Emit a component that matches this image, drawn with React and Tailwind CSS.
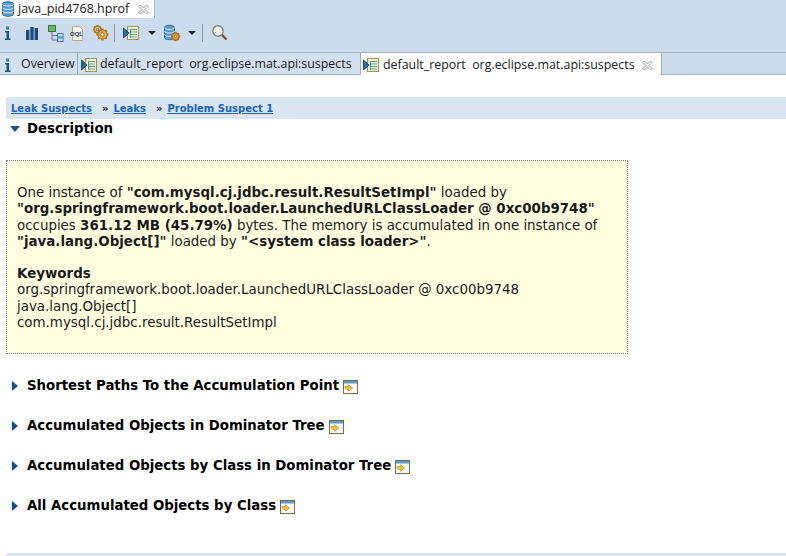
import React from 'react';

const uiFont = "font-['Open_Sans','Noto_Sans',sans-serif]";

function InfoIcon() {
  return (
    <svg width="16" height="16" viewBox="0 0 16 16" className="block">
      <rect x="6" y="1.5" width="3" height="3" fill="#2f7fb8" />
      <path d="M5 6h4v7.5h1.5V15H5v-1.5h1.5V7.5H5z" fill="#14568f" />
    </svg>
  );
}

function BarsIcon() {
  return (
    <svg width="16" height="16" viewBox="0 0 16 16" className="block">
      <rect x="2" y="5" width="3.4" height="10" fill="#1f4a7c" />
      <rect x="6.3" y="2" width="3.4" height="13" fill="#1f4a7c" />
      <rect x="10.6" y="3" width="3.4" height="12" fill="#1f4a7c" />
    </svg>
  );
}

function TreeIcon() {
  return (
    <svg width="18" height="18" viewBox="0 0 18 18" className="block">
      <rect x="1.5" y="1.5" width="7" height="6" fill="#6fb26a" stroke="#2f7a3c" />
      <path d="M5 8v8h5M5 11.5h5" fill="none" stroke="#6d7680" />
      <rect x="10.5" y="9.5" width="5.5" height="3.5" fill="#cfe2f5" stroke="#3f7fc0" />
      <rect x="10.5" y="14" width="5.5" height="3.5" fill="#cfe2f5" stroke="#3f7fc0" />
    </svg>
  );
}

function OqlIcon() {
  return (
    <svg width="16" height="18" viewBox="0 0 16 18" className="block">
      <path d="M3.5 2.5h7l3 3v11h-10z" fill="#f7f5ec" stroke="#b5a888" />
      <text x="1" y="12" fontSize="6" fontWeight="700" fill="#26365c" fontFamily="'Liberation Sans',sans-serif">OQL</text>
    </svg>
  );
}

function Gear({ x = 9, y = 9, r = 5.5, fill = '#e6ab45' }) {
  const teeth = [0, 45, 90, 135];
  return (
    <g>
      {teeth.map((a) => (
        <rect key={a} x={x - r - 1.5} y={y - 1.2} width={2 * r + 3} height="2.4" fill="#a8742a" transform={`rotate(${a} ${x} ${y})`} />
      ))}
      <circle cx={x} cy={y} r={r} fill={fill} stroke="#a8742a" />
      <circle cx={x} cy={y} r={r * 0.4} fill="#f6f1e2" stroke="#a8742a" />
    </g>
  );
}

function GearsIcon() {
  return (
    <svg width="18" height="18" viewBox="0 0 18 18" className="block">
      <Gear x={5.5} y={5.5} r={3} fill="#e3d6b4" />
      <Gear x={10.5} y={10.5} r={4.5} />
    </svg>
  );
}

function ReportIcon() {
  return (
    <svg width="17" height="16" viewBox="0 0 17 16" className="block shrink-0">
      <rect x="4.5" y="1.5" width="11" height="13" fill="#f6f8ee" stroke="#a98d50" />
      <path d="M8 4.5h6M8 7h6M8 9.5h6M8 12h6" stroke="#4f9e68" />
      <path d="M7.5 4v9" stroke="#4f9e68" />
      <path d="M0.5 3v10l5.5-5z" fill="#1d6fb0" stroke="#12385f" strokeWidth="0.8" />
    </svg>
  );
}

function HeapIcon() {
  return (
    <svg width="20" height="18" viewBox="0 0 20 18" className="block">
      <path d="M1.5 3.5c0-3 10-3 10 0v10c0 3-10 3-10 0z" fill="#5b9bd5" stroke="#2e6a9f" />
      <path d="M1.5 3.5c0 2.6 10 2.6 10 0M1.5 7c0 2.6 10 2.6 10 0M1.5 10.5c0 2.6 10 2.6 10 0" fill="none" stroke="#d9ebf8" />
      <Gear x={12.5} y={12.5} r={3.2} />
    </svg>
  );
}

function SearchIcon() {
  return (
    <svg width="18" height="18" viewBox="0 0 18 18" className="block">
      <path d="M10.5 10.5l5 5" stroke="#8a4a3a" strokeWidth="2.4" />
      <circle cx="7" cy="7" r="5.2" fill="#f8f6e8" stroke="#7d8288" strokeWidth="1.4" />
    </svg>
  );
}

function Caret() {
  return <span className="block w-0 h-0 border-x-[4px] border-x-transparent border-t-[4px] border-t-[#222]" />;
}

function Separator() {
  return <span className="block w-px h-[18px] bg-[#8c98a4]" />;
}

function CloseIcon() {
  return (
    <svg width="11" height="11" viewBox="0 0 11 11" className="block shrink-0">
      <path d="M1 2.5L2.5 1 5.5 4 8.5 1 10 2.5 7 5.5 10 8.5 8.5 10 5.5 7 2.5 10 1 8.5 4 5.5 1 2.5z" fill="#fff" stroke="#8a9097" strokeWidth="0.9" />
    </svg>
  );
}

function DetailsIcon() {
  return (
    <svg width="15" height="14" viewBox="0 0 15 14" className="block">
      <rect x="0.5" y="0.5" width="14" height="13" fill="#fbfaf0" stroke="#7b6a48" />
      <rect x="1" y="1" width="13" height="2.5" fill="#5b9bd5" />
      <path d="M2 6.5h3.5V4.8L9.5 8l-4 3.2V9.5H4c-1 0-2-1-2-3z" fill="#f0c044" stroke="#c08e2a" strokeWidth="0.7" />
    </svg>
  );
}

function SectionHeading({ title }) {
  return (
    <div className="flex items-center h-[20px]">
      <span className="ml-[12px] w-0 h-0 border-y-[5px] border-y-transparent border-l-[6px] border-l-[#1d4f86]" />
      <h5 className="ml-[9px] text-[13.3px] font-bold text-black">{title}</h5>
      <span className="ml-[4px] mt-[1px]"><DetailsIcon /></span>
    </div>
  );
}

function Crumb({ children }) {
  return <a className="font-bold underline text-[#1c62b8] text-[10px]">{children}</a>;
}

export default function App() {
  const sections = [
    'Shortest Paths To the Accumulation Point',
    'Accumulated Objects in Dominator Tree',
    'Accumulated Objects by Class in Dominator Tree',
    'All Accumulated Objects by Class',
  ];

  return (
    <div className="h-[556px] w-[786px] overflow-hidden bg-white flex flex-col font-['DejaVu_Sans',sans-serif]">
      <div className={`h-[18px] bg-[#cddcec] flex ${uiFont}`}>
        <div className="w-[155px] h-[18px] bg-white border-r border-[#aebccb] flex items-center pl-[1px] text-[12.5px] text-[#1a1a1a]">
          <svg width="16" height="16" viewBox="0 0 16 16" className="shrink-0">
            <path d="M1.5 3c0-3 11-3 11 0v10c0 3-11 3-11 0z" fill="#5b9bd5" stroke="#2e6a9f" />
            <path d="M1.5 3c0 2.6 11 2.6 11 0M1.5 6.5c0 2.6 11 2.6 11 0M1.5 10c0 2.6 11 2.6 11 0" fill="none" stroke="#d9ebf8" />
          </svg>
          <span className="ml-[1px]">java_pid4768.hprof</span>
          <span className="ml-[9px]"><CloseIcon /></span>
        </div>
      </div>

      <div className="h-[34px] bg-[#cddcec] flex items-center pb-[5px]">
        <span className="ml-0"><InfoIcon /></span>
        <span className="ml-[8px]"><BarsIcon /></span>
        <span className="ml-[7px]"><TreeIcon /></span>
        <span className="ml-[4px]"><OqlIcon /></span>
        <span className="ml-[7px]"><GearsIcon /></span>
        <span className="ml-[4px]"><Separator /></span>
        <span className="ml-[8px]"><ReportIcon /></span>
        <span className="ml-[8px]"><Caret /></span>
        <span className="ml-[7px]"><HeapIcon /></span>
        <span className="ml-[5px]"><Caret /></span>
        <span className="ml-[6px]"><Separator /></span>
        <span className="ml-[8px]"><SearchIcon /></span>
      </div>

      <div className={`h-[23px] bg-[#cddcec] flex items-end border-t border-b border-[#a7b3bf] text-[12.4px] text-[#1a1a1a] ${uiFont}`}>
        <div className="h-[21px] w-[78px] flex items-center border-r border-[#9aa6b2] bg-[#d3e0ef] pt-[2px]">
          <InfoIcon />
          <span className="ml-[5px]">Overview</span>
        </div>
        <div className="h-[21px] w-[282px] flex items-center bg-[#d3e0ef] pl-[3px] pt-[2px]">
          <ReportIcon />
          <span className="ml-[2px] whitespace-pre">default_report  org.eclipse.mat.api:suspects</span>
        </div>
        <div className="h-[22px] w-[302px] -mb-px flex items-center bg-white border-r border-l border-[#a0acb8] pl-[2px] pt-[2px]">
          <ReportIcon />
          <span className="ml-[3px] whitespace-pre">default_report  org.eclipse.mat.api:suspects</span>
          <span className="ml-[7px]"><CloseIcon /></span>
        </div>
      </div>

      <div className="flex-1 flex flex-col pt-[22px] pl-[6px] text-[#1a1a1a]">
        <div className="h-[22px] bg-[#d9e5f0] flex items-center pl-[5px] pt-[1px] text-[10px]">
          <Crumb>Leak Suspects</Crumb>
          <span className="ml-[10px] mr-[5px] font-bold">»</span>
          <Crumb>Leaks</Crumb>
          <span className="ml-[10px] mr-[5px] font-bold">»</span>
          <Crumb>Problem Suspect 1</Crumb>
        </div>

        <div className="flex items-center h-[18px] mt-[1px]">
          <span className="ml-[4px] w-0 h-0 border-x-[5px] border-x-transparent border-t-[6px] border-t-[#1d4f86]" />
          <h5 className="ml-[7px] text-[13.3px] font-bold text-black">Description</h5>
        </div>

        <div className="mt-[22px] w-[622px] h-[194px] bg-[#ffffe0] border border-dotted border-[#777] pt-[24px] pl-[10px] text-[13.4px] leading-[16.3px]">
          <p>
            One instance of <b>"com.mysql.cj.jdbc.result.ResultSetImpl"</b> loaded by{' '}
            <b>"org.springframework.boot.loader.LaunchedURLClassLoader @ 0xc00b9748"</b> occupies{' '}
            <b>361.12 MB (45.79%)</b> bytes. The memory is accumulated in one instance of{' '}
            <b>"java.lang.Object[]"</b> loaded by <b>"&lt;system class loader&gt;"</b>.
          </p>
          <p className="mt-[16px] font-bold">Keywords</p>
          <p>org.springframework.boot.loader.LaunchedURLClassLoader @ 0xc00b9748</p>
          <p>java.lang.Object[]</p>
          <p>com.mysql.cj.jdbc.result.ResultSetImpl</p>
        </div>

        <div className="-ml-[6px] mt-[22px] flex flex-col gap-[20px]">
          {sections.map((title) => (
            <SectionHeading key={title} title={title} />
          ))}
        </div>

        <div className="mt-auto h-[3px] bg-[#d9e5f0]" />
      </div>
    </div>
  );
}
